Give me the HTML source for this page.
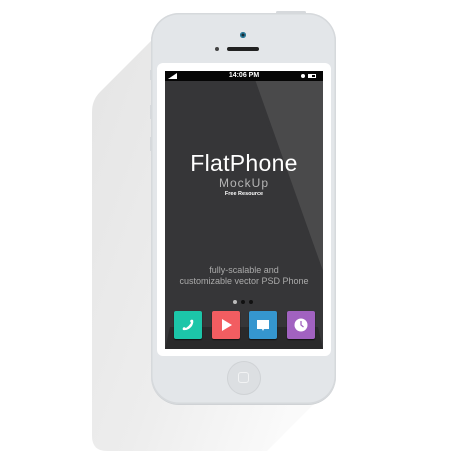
<!DOCTYPE html>
<html><head><meta charset="utf-8"><style>
body{margin:0;width:469px;height:460px;background:#fff;position:relative;overflow:hidden;font-family:"Liberation Sans",sans-serif}
.a{position:absolute}
</style></head><body>
<svg class="a" style="left:0;top:0" width="469" height="460">
<defs><linearGradient id="sg" x1="0" y1="0" x2="1" y2="0.6">
<stop offset="0" stop-color="#e5e5e5"/><stop offset="0.55" stop-color="#ededed"/><stop offset="1" stop-color="#fafafa"/></linearGradient></defs>
<path d="M152 40 L100 92 Q92 100 92 112 L92 436 Q92 451 107 451 L267 451 L336 382 L336 40 Z" fill="url(#sg)"/>
</svg>
<div class="a" style="left:151px;top:13px;width:185px;height:391px;background:#e3e6e9;border-radius:28px;box-shadow:inset 0 0 0 1.5px #d6d9dc, 0 1px 0 #cfd2d5"></div>
<div class="a" style="left:150px;top:70px;width:2px;height:10px;background:#d6d9dc"></div>
<div class="a" style="left:150px;top:105px;width:2px;height:14px;background:#d6d9dc"></div>
<div class="a" style="left:150px;top:137px;width:2px;height:14px;background:#d6d9dc"></div>
<div class="a" style="left:276px;top:11px;width:30px;height:3px;background:#d6d9dc;border-radius:2px"></div>
<div class="a" style="left:240px;top:32px;width:6px;height:6px;background:#1a2a33;border-radius:50%;box-shadow:inset 0 0 0 1.5px #2a7fa0"></div>
<div class="a" style="left:215px;top:47px;width:4px;height:4px;background:#444;border-radius:50%"></div>
<div class="a" style="left:227px;top:47px;width:32px;height:4px;background:#222;border-radius:2px"></div>
<div class="a" style="left:157px;top:63px;width:174px;height:293px;background:#fff;border-radius:6px"></div>
<div class="a" style="left:165px;top:71px;width:158px;height:278px;background:#363638;overflow:hidden">
<div class="a" style="left:0;top:0;width:158px;height:278px;background:#4a4a4b;clip-path:polygon(87px 0,158px 0,158px 200px)"></div>
<div class="a" style="left:0;top:10px;width:158px;height:268px;background:#363638;clip-path:polygon(0 0,87px 0,158px 190px,158px 268px,0 268px)"></div>
<div class="a" style="left:0;top:0;width:158px;height:10px;background:#050505;color:#fff;font-size:7px;font-weight:bold;text-align:center;line-height:10px">14:06 PM</div>
<svg class="a" style="left:3px;top:2px" width="10" height="6"><path d="M0 6 L9 0 L9 6Z" fill="#fff"/></svg>
<div class="a" style="left:136px;top:3px;width:4px;height:4px;border-radius:50%;background:#fff"></div>
<div class="a" style="left:143px;top:3px;width:8px;height:4px;border:0.5px solid #fff;box-sizing:border-box;background:linear-gradient(90deg,#fff 50%,transparent 50%)"></div>
<div class="a" style="left:0;top:79px;width:158px;text-align:center;color:#fff;font-size:23px;letter-spacing:0.3px">FlatPhone</div>
<div class="a" style="left:0;top:105px;width:158px;text-align:center;color:#b5b5b5;font-size:12px;letter-spacing:1px">MockUp</div>
<div class="a" style="left:0;top:120px;width:158px;text-align:center;color:#fff;font-size:5.5px;font-weight:bold">Free Resource</div>
<div class="a" style="left:0;top:194px;width:158px;text-align:center;color:#aaa;font-size:9px;line-height:11px">fully-scalable and<br>customizable vector PSD Phone</div>
<div class="a" style="left:68px;top:229px;width:4px;height:4px;border-radius:50%;background:#bbb"></div>
<div class="a" style="left:76px;top:229px;width:4px;height:4px;border-radius:50%;background:#111"></div>
<div class="a" style="left:84px;top:229px;width:4px;height:4px;border-radius:50%;background:#111"></div>
<div class="a" style="left:0;top:256px;width:158px;height:22px;background:#2a2a2b;clip-path:polygon(5px 0,153px 0,158px 22px,0 22px)"></div>
<div class="a" style="left:9px;top:240px;width:28px;height:28px;background:#1cc6a9;border-radius:2px;box-shadow:0 1px 1px #111"></div>
<div class="a" style="left:47px;top:240px;width:28px;height:28px;background:#f25d61;border-radius:2px;box-shadow:0 1px 1px #111"></div>
<div class="a" style="left:84px;top:240px;width:28px;height:28px;background:#3596cf;border-radius:2px;box-shadow:0 1px 1px #111"></div>
<div class="a" style="left:122px;top:240px;width:28px;height:28px;background:#a162c0;border-radius:2px;box-shadow:0 1px 1px #111"></div>
<svg class="a" style="left:9px;top:240px" width="28" height="28"><path d="M9 19 Q8 17 10 16 L12 17 Q15 15 17 12 L16 10 Q17 8 19 9 Q20 11 18 15 Q14 20 9 19Z" fill="#fff"/></svg>
<svg class="a" style="left:47px;top:240px" width="28" height="28"><path d="M10 8 L20 14 L10 20Z" fill="#fff"/></svg>
<svg class="a" style="left:84px;top:240px" width="28" height="28"><path d="M8 9 H20 V18 H15 L14 20 L13 18 H8Z" fill="#fff"/></svg>
<svg class="a" style="left:122px;top:240px" width="28" height="28"><circle cx="14" cy="14" r="6.5" fill="#fff"/><path d="M14 10 V14 L16.5 16" stroke="#a162c0" stroke-width="1.3" fill="none"/></svg>
</div>
<div class="a" style="left:227px;top:361px;width:34px;height:34px;border-radius:50%;background:#dcdfe2;box-shadow:inset 0 0 0 1px #d0d3d6"></div>
<div class="a" style="left:238px;top:372px;width:11px;height:11px;border:1.5px solid #f2f3f4;border-radius:3px;box-sizing:border-box"></div>
</body></html>
